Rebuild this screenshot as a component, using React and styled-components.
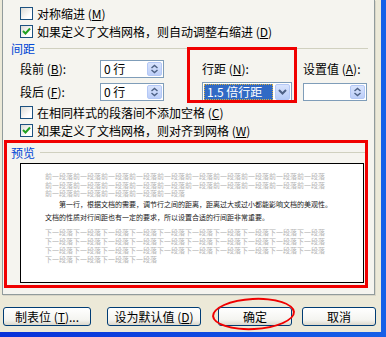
import React from "react";
import styled, { createGlobalStyle } from "styled-components";

const Global = createGlobalStyle`
  html, body { margin: 0; padding: 0; }
  body {
    width: 386px; height: 337px; overflow: hidden;
    background: #ECE9D8;
    font-family: "Noto Sans CJK SC", "Liberation Sans", sans-serif;
    font-size: 12px; color: #000;
  }
`;

const Frame = styled.div`
  width: 386px;
  height: 337px;
  box-sizing: border-box;
  padding: 0 5px 5px 0;
  background: linear-gradient(to right, #0831D9, #1660E8);
`;

const Win = styled.div`
  height: 100%;
  box-sizing: border-box;
  background: #ECE9D8;
  padding: 0 6px 0 2px;
  display: flex;
  flex-direction: column;
`;

const Panel = styled.div`
  position: relative;
  box-sizing: border-box;
  height: 295px;
  background: #F5F4EF;
  border: 1px solid #919B9C;
  border-top: none;
  padding: 4px 6px 0 8px;
  box-shadow: 1px 1px 0 #D8D5C7;
`;

const CheckRow = styled.div`
  display: flex;
  align-items: center;
  gap: 4px;
  height: 18px;
  padding-left: 9px;
  white-space: nowrap;
`;

const Box = styled.span`
  width: 13px;
  height: 13px;
  box-sizing: border-box;
  border: 1px solid #1C5180;
  background: linear-gradient(135deg, #DCDBD5, #FFFFFF 70%);
  display: flex;
  align-items: center;
  justify-content: center;
  flex-shrink: 0;
`;

const GroupHead = styled.div`
  display: flex;
  align-items: center;
  gap: 5px;
  height: 16px;
  color: #0046D5;
  margin-top: ${(p) => p.$mt || 0}px;
  &::after {
    content: "";
    flex: 1;
    height: 1px;
    background: #D0D0BF;
  }
`;

const SpacingGrid = styled.div`
  display: grid;
  grid-template-columns: 80px 102px 101px 64px;
  grid-template-rows: 23px 23px;
  align-items: center;
  padding-left: 9px;
  margin-top: 1px;
  white-space: nowrap;
`;

const Label = styled.span`
  line-height: 14px;
`;

const SpinBox = styled.div`
  width: 64px;
  height: 18px;
  box-sizing: border-box;
  border: 1px solid #7F9DB9;
  background: #fff;
  display: flex;
  align-items: center;
  justify-content: space-between;
  padding: 0 1px 0 3px;
`;

const SpinBtn = styled.span`
  width: 15px;
  height: 14px;
  box-sizing: border-box;
  border: 1px solid #B4C8F6;
  border-radius: 2px;
  background: linear-gradient(#D9E4FD, #BCCEF8);
  display: flex;
  align-items: center;
  justify-content: center;
`;

const Select = styled.div`
  width: 90px;
  height: 20px;
  box-sizing: border-box;
  border: 1px solid #7F9DB9;
  background: #fff;
  display: flex;
  align-items: stretch;
  padding: 1px;
  gap: 2px;
`;

const Picked = styled.span`
  flex: 1;
  background: #316AC5;
  color: #fff;
  outline: 1px dotted #D8B040;
  outline-offset: -1px;
  padding-left: 3px;
  display: flex;
  align-items: center;
`;

const DropBtn = styled.span`
  width: 15px;
  box-sizing: border-box;
  border: 1px solid #B4C8F6;
  border-radius: 2px;
  background: linear-gradient(#D9E4FD, #B6CBF7);
  display: flex;
  align-items: center;
  justify-content: center;
`;

const PreviewBox = styled.div`
  height: 120px;
  box-sizing: border-box;
  margin: 3px 4px 0 9px;
  border: 1px solid #000;
  background: #fff;
  padding: 8px 0 0 24px;
  overflow: hidden;
`;

const Para = styled.div`
  width: 281px;
  font-size: 7px;
  line-height: ${(p) => p.$lh}px;
  color: ${(p) => (p.$dim ? "#B4B4B4" : "#202020")};
  margin-top: ${(p) => p.$mt || 0}px;
  text-indent: ${(p) => p.$indent || 0}px;
  word-break: break-all;
  white-space: ${(p) => (p.$dim ? "normal" : "nowrap")};
`;

const Annot = styled.div`
  position: absolute;
  left: ${(p) => p.$x}px;
  top: ${(p) => p.$y}px;
  width: ${(p) => p.$w}px;
  height: ${(p) => p.$h}px;
  box-sizing: border-box;
  border: 3px solid #F00000;
  pointer-events: none;
`;

const ButtonRow = styled.div`
  display: flex;
  margin-top: 12px;
  padding-left: 1px;
`;

const BtnWrap = styled.div`
  position: relative;
  flex-shrink: 0;
  margin-left: ${(p) => p.$ml || 0}px;
`;

const Btn = styled.button`
  width: ${(p) => p.$w}px;
  height: 19px;
  box-sizing: border-box;
  border: 1px solid #003C74;
  border-radius: 3px;
  background: linear-gradient(#FFFFFF, #F4F4F0 70%, #DCD8CC);
  font-family: inherit;
  font-size: 12px;
  color: #000;
  padding: 0;
  display: flex;
  align-items: center;
  justify-content: center;
  white-space: nowrap;
`;

const Ellipse = styled.div`
  position: absolute;
  left: -6px;
  top: -9px;
  width: 83px;
  height: 32px;
  box-sizing: border-box;
  border: 2px solid #F00000;
  border-radius: 50%;
  transform: rotate(-3deg);
  pointer-events: none;
`;

const Check = ({ on }) => (
  <Box>
    {on && (
      <svg width="9" height="9" viewBox="0 0 9 9">
        <path d="M1 4 L3.5 6.5 L8 1.5" fill="none" stroke="#21A121" strokeWidth="2" />
      </svg>
    )}
  </Box>
);

const UpDown = () => (
  <svg width="9" height="10" viewBox="0 0 9 10">
    <path d="M1.5 4 L4.5 1.5 L7.5 4 M1.5 6 L4.5 8.5 L7.5 6" fill="none" stroke="#4D6185" strokeWidth="1.4" />
  </svg>
);

const Down = () => (
  <svg width="9" height="6" viewBox="0 0 9 6">
    <path d="M1 1 L4.5 4.5 L8 1" fill="none" stroke="#4D6185" strokeWidth="2" />
  </svg>
);

const Key = ({ k }) => (
  <>
    {" ("}
    <u>{k}</u>
    {")"}
  </>
);

const Spin = ({ value }) => (
  <SpinBox>
    <span>{value}</span>
    <SpinBtn>
      <UpDown />
    </SpinBtn>
  </SpinBox>
);

export default function App() {
  return (
    <Frame>
      <Global />
      <Win>
        <Panel>
          <CheckRow>
            <Check />
            <span>
              对称缩进<Key k="M" />
            </span>
          </CheckRow>
          <CheckRow>
            <Check on />
            <span>
              如果定义了文档网格，则自动调整右缩进<Key k="D" />
            </span>
          </CheckRow>

          <GroupHead>间距</GroupHead>
          <SpacingGrid>
            <Label>
              段前<Key k="B" />:
            </Label>
            <Spin value="0 行" />
            <Label>
              行距<Key k="N" />:
            </Label>
            <Label>
              设置值<Key k="A" />:
            </Label>
            <Label>
              段后<Key k="F" />:
            </Label>
            <Spin value="0 行" />
            <Select>
              <Picked>1.5 倍行距</Picked>
              <DropBtn>
                <Down />
              </DropBtn>
            </Select>
            <Spin value="" />
          </SpacingGrid>

          <CheckRow>
            <Check />
            <span>
              在相同样式的段落间不添加空格<Key k="C" />
            </span>
          </CheckRow>
          <CheckRow>
            <Check on />
            <span>
              如果定义了文档网格，则对齐到网格<Key k="W" />
            </span>
          </CheckRow>

          <GroupHead $mt={5}>预览</GroupHead>
          <PreviewBox>
            <Para $dim $lh={8.5}>{"前一段落".repeat(25)}</Para>
            <Para $lh={13} $indent={14}>
              第一行，根据文档的需要，调节行之间的距离，距离过大或过小都能影响文档的美观性。
            </Para>
            <Para $lh={13}>文档的性质对行间距也有一定的要求，所以设置合适的行间距非常重要。</Para>
            <Para $dim $lh={9} $mt={4}>{"下一段落".repeat(34)}</Para>
          </PreviewBox>

          <Annot $x={184} $y={47} $w={110} $h={56} />
          <Annot $x={1} $y={140} $w={364} $h={148} />
        </Panel>

        <ButtonRow>
          <BtnWrap>
            <Btn $w={88}>
              制表位<Key k="T" />...
            </Btn>
          </BtnWrap>
          <BtnWrap $ml={16}>
            <Btn $w={94}>
              设为默认值<Key k="D" />
            </Btn>
          </BtnWrap>
          <BtnWrap $ml={17}>
            <Btn $w={74}>确定</Btn>
            <Ellipse />
          </BtnWrap>
          <BtnWrap $ml={10}>
            <Btn $w={74}>取消</Btn>
          </BtnWrap>
        </ButtonRow>
      </Win>
    </Frame>
  );
}
